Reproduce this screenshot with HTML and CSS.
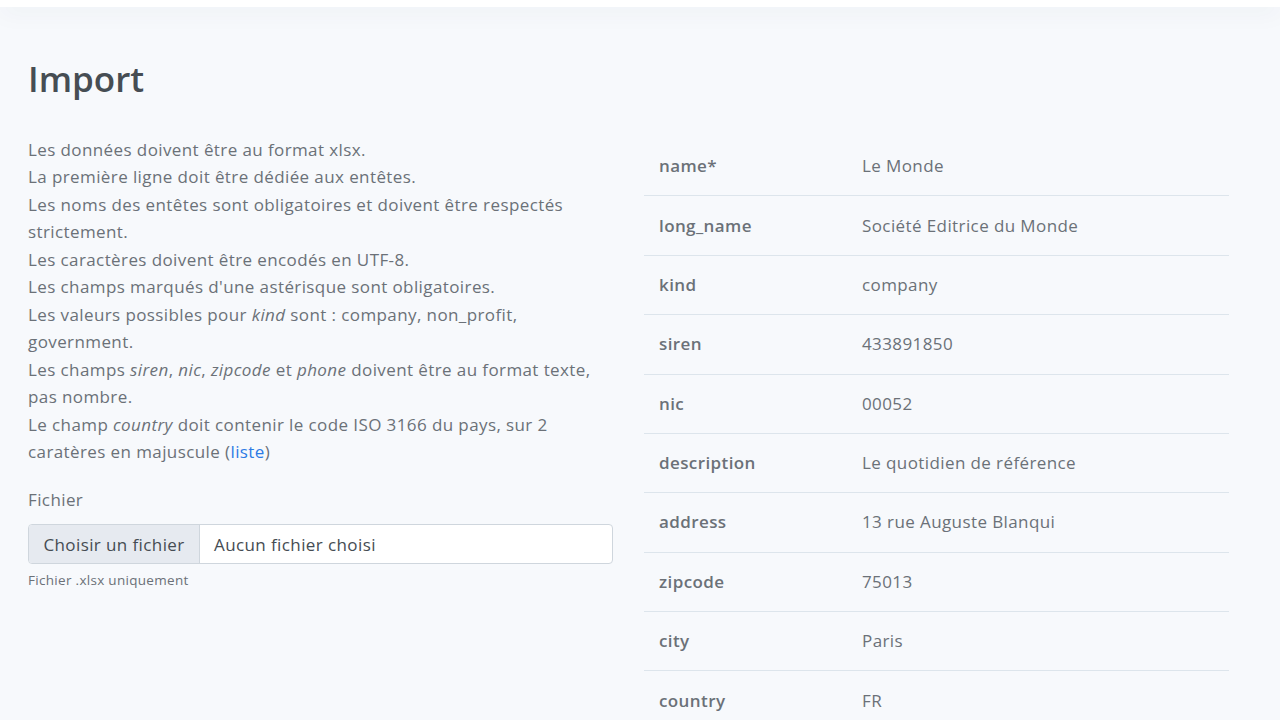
FILE: index.html
```html
<!DOCTYPE html>
<html lang="fr">
<head>
<meta charset="utf-8">
<title>Import</title>
<link rel="stylesheet" href="styles.css">
</head>
<body>
<header class="topbar"></header>
<main class="page">
  <h1 class="title">Import</h1>
  <div class="cols">
    <section class="left">
      <p class="rules">
        Les données doivent être au format xlsx.<br>
        La première ligne doit être dédiée aux entêtes.<br>
        Les noms des entêtes sont obligatoires et doivent être respectés strictement.<br>
        Les caractères doivent être encodés en UTF-8.<br>
        Les champs marqués d'une astérisque sont obligatoires.<br>
        Les valeurs possibles pour <em>kind</em> sont : company, non_profit, government.<br>
        Les champs <em>siren</em>, <em>nic</em>, <em>zipcode</em> et <em>phone</em> doivent être au format texte, pas nombre.<br>
        Le champ <em>country</em> doit contenir le code ISO 3166 du pays, sur 2 caratères en majuscule (<a href="#" class="link">liste</a>)
      </p>
      <div class="field">
        <label class="label">Fichier</label>
        <div class="file">
          <span class="file-btn">Choisir un fichier</span>
          <span class="file-name">Aucun fichier choisi</span>
        </div>
        <small class="help">Fichier .xlsx uniquement</small>
      </div>
    </section>
    <section class="right">
      <table class="sample">
        <tbody>
          <tr><th>name*</th><td>Le Monde</td></tr>
          <tr><th>long_name</th><td>Société Editrice du Monde</td></tr>
          <tr><th>kind</th><td>company</td></tr>
          <tr><th>siren</th><td>433891850</td></tr>
          <tr><th>nic</th><td>00052</td></tr>
          <tr><th>description</th><td>Le quotidien de référence</td></tr>
          <tr><th>address</th><td>13 rue Auguste Blanqui</td></tr>
          <tr><th>zipcode</th><td>75013</td></tr>
          <tr><th>city</th><td>Paris</td></tr>
          <tr><th>country</th><td>FR</td></tr>
        </tbody>
      </table>
    </section>
  </div>
</main>
</body>
</html>
```
FILE: styles.css
```css
* { box-sizing: border-box; }
html, body { margin: 0; padding: 0; }
body {
  background: #f7f9fc;
  font-family: "Open Sans", "Noto Sans", sans-serif;
  color: #6b7178;
  font-size: 17px;
  letter-spacing: 0.4px;
  overflow: hidden;
  height: 720px;
}
.topbar {
  height: 7px;
  background: #fff;
  box-shadow: 0 2px 24px rgba(40, 60, 90, 0.10);
  position: relative;
  z-index: 1;
}
.page {
  padding: 0 28px;
}
.title {
  margin: 0;
  padding-top: 50px;
  font-size: 35px;
  font-weight: 600;
  color: #464d53;
  line-height: 44px;
  letter-spacing: 0;
}
.cols {
  display: grid;
  grid-template-columns: 585px 585px;
  column-gap: 31px;
  margin-top: 28px;
}
.rules {
  margin: 7px 0 0;
  line-height: 27.45px;
}
.rules em { font-style: italic; }
.link { color: #2c7be5; text-decoration: none; }
.field { margin-top: 23px; }
.label {
  display: block;
  line-height: 24px;
  margin-bottom: 12px;
}
.file {
  display: flex;
  height: 40px;
  border: 1px solid #cfd6dd;
  border-radius: 4px;
  background: #fff;
  overflow: hidden;
  color: #454c53;
}
.file-btn {
  width: 171px;
  background: #e6eaf0;
  border-right: 1px solid #cfd6dd;
  display: flex;
  align-items: center;
  justify-content: center;
}
.file-name {
  display: flex;
  align-items: center;
  padding-left: 14px;
}
.help {
  display: block;
  margin-top: 7px;
  font-size: 13.5px;
  letter-spacing: 0.3px;
  color: #6b7178;
}
.sample {
  width: 100%;
  border-collapse: collapse;
  margin-top: 8px;
}
.sample th, .sample td {
  text-align: left;
  padding: 17.2px 15px;
  line-height: 24px;
  border-top: 1px solid #dde5ec;
}
.sample tr:first-child th, .sample tr:first-child td { border-top: none; }
.sample th {
  width: 203px;
  font-weight: 600;
  color: #6b7178;
}
.sample td { color: #6b7178; }
```
